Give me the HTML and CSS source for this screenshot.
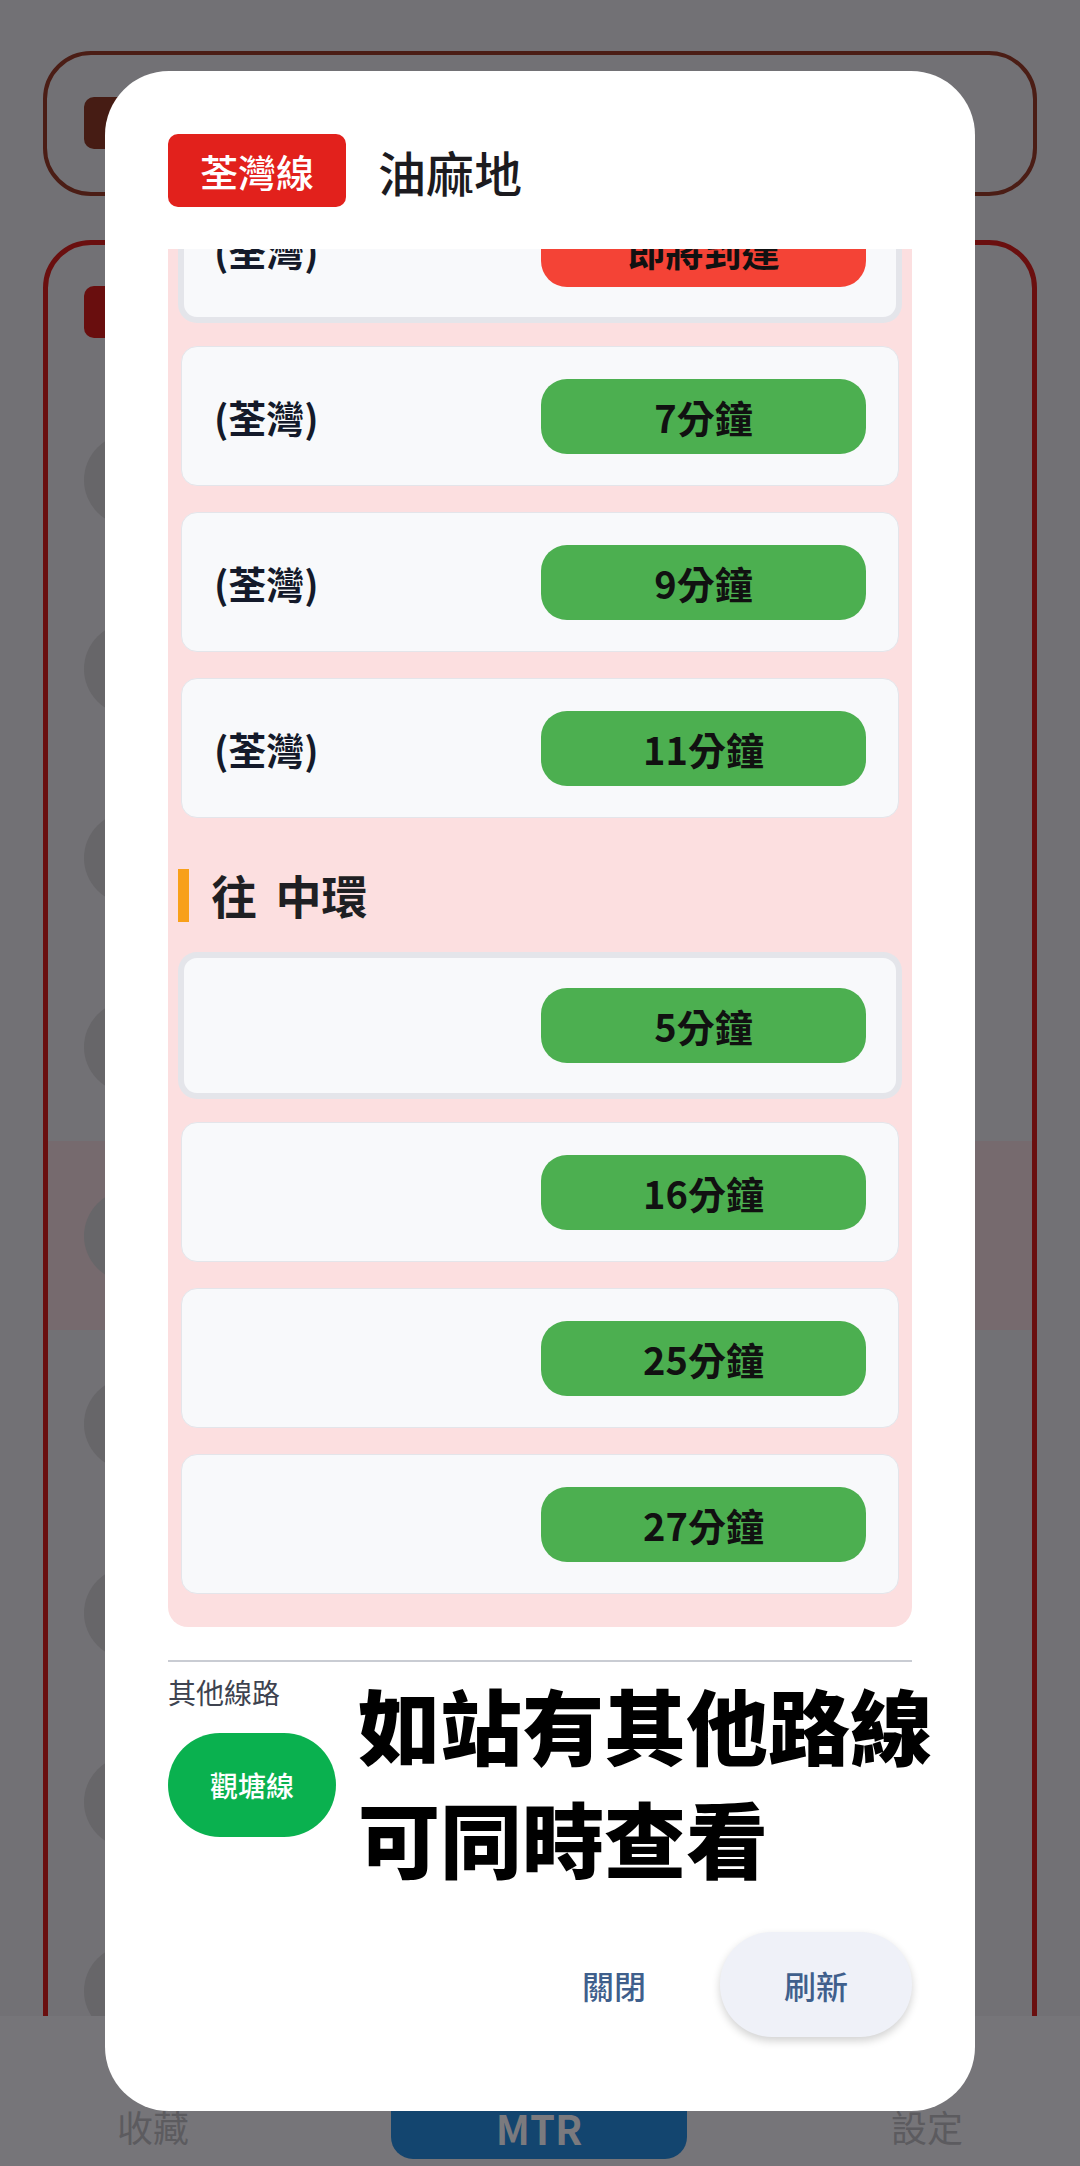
FILE: index.html
```html
<!DOCTYPE html>
<html lang="zh-Hant">
<head>
<meta charset="utf-8">
<title>油麻地 - 荃灣線</title>
<link rel="stylesheet" href="styles.css">
</head>
<body>
<div class="app">
  <div class="app-main">
    <div class="bg-card bg-card-1"><div class="bg-chip chip-1"></div></div>
    <div class="bg-card bg-card-2">
      <div class="bg-chip chip-2"></div>
      <div class="bg-row"><span class="bg-avatar"></span></div>
      <div class="bg-row"><span class="bg-avatar"></span></div>
      <div class="bg-row"><span class="bg-avatar"></span></div>
      <div class="bg-row"><span class="bg-avatar"></span></div>
      <div class="bg-row is-hl"><span class="bg-avatar"></span></div>
      <div class="bg-row"><span class="bg-avatar"></span></div>
      <div class="bg-row"><span class="bg-avatar"></span></div>
      <div class="bg-row"><span class="bg-avatar"></span></div>
      <div class="bg-row"><span class="bg-avatar"></span></div>
    </div>
  </div>
  <nav class="bg-nav">
    <div class="bg-tab">收藏</div>
    <div class="bg-tab bg-tab-active">MTR</div>
    <div class="bg-tab bg-tab-end">設定</div>
  </nav>
</div>

<div class="modal">
  <header class="modal-head">
    <span class="line-badge">荃灣線</span>
    <h1 class="station">油麻地</h1>
  </header>

  <div class="modal-scroll">
    <div class="eta-panel">
      <section class="dir-group">
        <h2 class="dir-title">往 荃灣</h2>
        <div class="eta-list">
          <div class="eta-card is-first"><span class="eta-dest">(荃灣)</span><span class="eta-pill is-arriving">即將到達</span></div>
          <div class="eta-card"><span class="eta-dest">(荃灣)</span><span class="eta-pill">7分鐘</span></div>
          <div class="eta-card"><span class="eta-dest">(荃灣)</span><span class="eta-pill">9分鐘</span></div>
          <div class="eta-card"><span class="eta-dest">(荃灣)</span><span class="eta-pill">11分鐘</span></div>
        </div>
      </section>
      <section class="dir-group">
        <h2 class="dir-title">往 中環</h2>
        <div class="eta-list">
          <div class="eta-card is-first"><span class="eta-dest"></span><span class="eta-pill">5分鐘</span></div>
          <div class="eta-card"><span class="eta-dest"></span><span class="eta-pill">16分鐘</span></div>
          <div class="eta-card"><span class="eta-dest"></span><span class="eta-pill">25分鐘</span></div>
          <div class="eta-card"><span class="eta-dest"></span><span class="eta-pill">27分鐘</span></div>
        </div>
      </section>
    </div>
  </div>

  <div class="modal-foot">
    <div class="other-lines">
      <div class="other-col">
        <div class="other-label">其他線路</div>
        <button class="other-line-btn" type="button">觀塘線</button>
      </div>
      <p class="callout">如站有其他路線<br>可同時查看</p>
    </div>
    <div class="actions">
      <button class="btn-text" type="button">關閉</button>
      <button class="btn-tonal" type="button">刷新</button>
    </div>
  </div>
</div>
</body>
</html>
```

FILE: styles.css
```css
* { box-sizing: border-box; }

html, body {
  margin: 0;
  padding: 0;
}

body {
  width: 1080px;
  height: 2166px;
  overflow: hidden;
  position: relative;
  background: #727175;
  font-family: "Noto Sans CJK TC", "Noto Sans CJK SC", "Noto Sans", sans-serif;
}

/* ---------- dimmed app behind the dialog ---------- */
.app {
  height: 2166px;
  display: flex;
  flex-direction: column;
}

.app-main {
  height: 2016px;
  overflow: hidden;
  padding: 51px 43px 0;
}

.bg-card {
  border-radius: 48px;
}

.bg-card-1 {
  height: 145px;
  border: 4px solid #4b1d15;
  padding: 42px 0 0 37px;
}

.bg-card-2 {
  margin-top: 44px;
  height: 2300px;
  border: 5px solid #6a0f0f;
  padding-top: 41px;
}

.bg-chip {
  width: 160px;
  height: 52px;
  border-radius: 10px;
}

.chip-1 { background: #461c14; }

.chip-2 {
  background: #690e0e;
  margin: 0 0 48px 36px;
}

.bg-row {
  height: 188.8px;
  display: flex;
  align-items: center;
  padding-left: 36px;
}

.bg-row.is-hl { background: #766a6e; }

.bg-avatar {
  width: 92px;
  height: 92px;
  border-radius: 50%;
  background: #676669;
}

.bg-nav {
  height: 150px;
  background: #767579;
  display: flex;
  align-items: flex-end;
}

.bg-tab {
  width: 306px;
  text-align: center;
  font-size: 36px;
  line-height: 52px;
  color: #5c5b5f;
  padding-bottom: 14px;
}

.bg-tab-active {
  width: 296px;
  margin-left: 85px;
  height: 133px;
  margin-bottom: 7px;
  padding-bottom: 7px;
  background: #13456f;
  border-radius: 22px;
  color: #7b7a7e;
  font-weight: 700;
  font-size: 40px;
  line-height: 48px;
  display: flex;
  align-items: flex-end;
  justify-content: center;
}

.bg-tab-end { margin-left: auto; }

/* ---------- dialog ---------- */
.modal {
  position: absolute;
  top: 71px;
  left: 105px;
  width: 870px;
  height: 2040px;
  background: #ffffff;
  border-radius: 64px;
  padding: 0 63px;
  display: flex;
  flex-direction: column;
  overflow: hidden;
}

.modal-head {
  flex: none;
  padding: 63px 0 42px;
  display: flex;
  align-items: center;
  gap: 32px;
}

.line-badge {
  height: 73px;
  padding: 0 32px;
  display: flex;
  align-items: center;
  background: #e2211c;
  color: #ffffff;
  border-radius: 10px;
  font-size: 38px;
  font-weight: 500;
}

.station {
  margin: 0;
  font-size: 48px;
  font-weight: 500;
  color: #1c1b1f;
}

.modal-scroll {
  flex: 1 1 auto;
  min-height: 0;
  overflow: hidden;
  display: flex;
  flex-direction: column;
  justify-content: flex-end;
}

.eta-panel {
  flex: none;
  background: #fcdfe0;
  border-radius: 20px;
  padding: 30px 13px 33px;
}

.dir-group + .dir-group { margin-top: 51px; }

.dir-title {
  margin: 0 0 33px -3px;
  height: 53px;
  border-left: 11px solid #f8a01a;
  padding-left: 22px;
  font-size: 46px;
  line-height: 50px;
  font-weight: 700;
  color: #1f1f23;
  word-spacing: 8px;
}

.eta-list {
  display: flex;
  flex-direction: column;
  gap: 26px;
}

.eta-card {
  height: 140px;
  padding: 0 32px;
  background: #f8f9fb;
  border: 1.5px solid #e4e5ea;
  border-radius: 16px;
  display: flex;
  align-items: center;
  justify-content: space-between;
}

.eta-card.is-first {
  height: 141px;
  border-width: 3px;
  box-shadow: 0 0 0 3px #e4e5ea;
  padding: 0 30px;
}

.eta-dest {
  font-size: 38px;
  font-weight: 700;
  color: #141a2a;
}

.eta-pill {
  width: 325px;
  height: 75px;
  border-radius: 26px;
  background: #4caf50;
  color: #111111;
  font-size: 38px;
  font-weight: 700;
  display: flex;
  align-items: center;
  justify-content: center;
}

.eta-pill.is-arriving { background: #f44336; }

.modal-foot {
  flex: none;
  margin-top: 33px;
  border-top: 2px solid #c9ccd3;
  padding: 5px 0 74px;
}

.other-lines {
  display: flex;
  align-items: flex-start;
}

.other-col {
  width: 168px;
  flex: none;
  display: flex;
  flex-direction: column;
}

.other-label {
  margin-top: 6px;
  font-size: 28px;
  line-height: 39px;
  color: #3e4350;
}

.other-line-btn {
  margin-top: 21px;
  width: 168px;
  height: 104px;
  border: 0;
  border-radius: 52px;
  background: #0ab14f;
  color: #ffffff;
  font-family: inherit;
  font-size: 28px;
  font-weight: 500;
  padding: 0;
}

.callout {
  margin: 0 0 0 22px;
  white-space: nowrap;
  font-size: 82px;
  line-height: 113px;
  font-weight: 900;
  color: #000000;
}

.actions {
  margin-top: 39px;
  display: flex;
  justify-content: flex-end;
  align-items: center;
}

.btn-text,
.btn-tonal {
  border: 0;
  font-family: inherit;
  font-size: 32px;
  font-weight: 500;
  color: #3f5f8c;
  padding: 0;
}

.btn-text {
  height: 105px;
  padding: 0 36px;
  margin-right: 38px;
  background: transparent;
}

.btn-tonal {
  width: 192px;
  height: 105px;
  border-radius: 52px;
  background: #eff1f8;
  box-shadow: 0 4px 8px rgba(0, 0, 0, 0.18);
}
```
